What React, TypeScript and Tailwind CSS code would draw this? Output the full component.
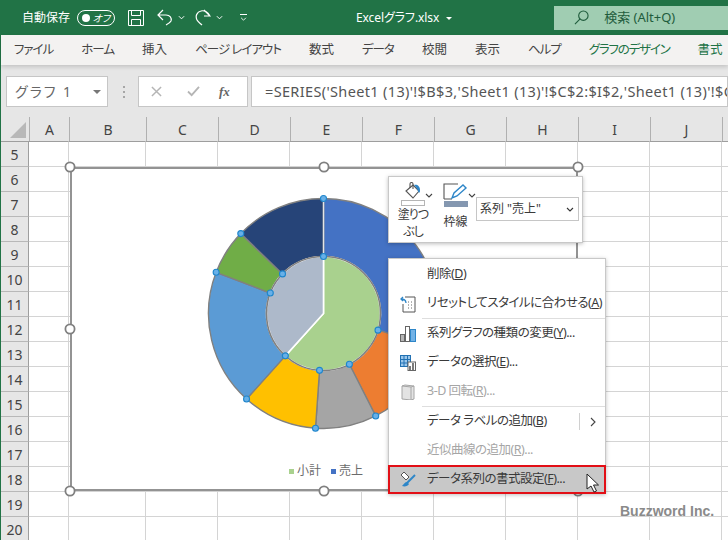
import type { ReactNode } from "react";

const font = "font-['Noto_Sans','Noto_Sans_CJK_JP',sans-serif] [font-feature-settings:'palt']";

const tabs = [
  { name: "ファイル", kana: true },
  { name: "ホーム", kana: true },
  { name: "挿入", kana: false },
  { name: "ページ レイアウト", kana: true },
  { name: "数式", kana: false },
  { name: "データ", kana: true },
  { name: "校閲", kana: false },
  { name: "表示", kana: false },
  { name: "ヘルプ", kana: true },
];
const columns = [
  { name: "A", w: "w-[40px]" },
  { name: "B", w: "w-[77px]" },
  { name: "C", w: "w-[72px]" },
  { name: "D", w: "w-[72px]" },
  { name: "E", w: "w-[72px]" },
  { name: "F", w: "w-[72px]" },
  { name: "G", w: "w-[72px]" },
  { name: "H", w: "w-[72px]" },
  { name: "I", w: "w-[72px]" },
  { name: "J", w: "w-[72px]" },
  { name: "", w: "w-[40px]" },
];
const rowNums = [5, 6, 7, 8, 9, 10, 11, 12, 13, 14, 15, 16, 17, 18, 19, 20];

const CX = 323.5;
const CY = 313.5;
const R = 115;
const RI = 57;

function pt(r: number, deg: number) {
  const a = (deg * Math.PI) / 180;
  return `${(CX + r * Math.sin(a)).toFixed(2)} ${(CY - r * Math.cos(a)).toFixed(2)}`;
}

function ring(a: number, b: number) {
  const large = b - a > 180 ? 1 : 0;
  return `M${pt(RI, a)} L${pt(R, a)} A${R} ${R} 0 ${large} 1 ${pt(R, b)} L${pt(RI, b)} A${RI} ${RI} 0 ${large} 0 ${pt(RI, a)}Z`;
}

function pie(a: number, b: number) {
  const large = b - a > 180 ? 1 : 0;
  return `M${CX} ${CY} L${pt(RI, a)} A${RI} ${RI} 0 ${large} 1 ${pt(RI, b)}Z`;
}

const outer = [
  { from: 0, to: 107, color: "#4472c4" },
  { from: 107, to: 153, color: "#ed7d31" },
  { from: 153, to: 184, color: "#a5a5a5" },
  { from: 184, to: 222, color: "#ffc000" },
  { from: 222, to: 291, color: "#5b9bd5" },
  { from: 291, to: 314, color: "#70ad47" },
  { from: 314, to: 360, color: "#264478" },
];
const handles = [0, 107, 153, 184, 222, 291, 314];
const frame = [
  [70, 167],
  [324, 167],
  [578, 167],
  [70, 329],
  [70, 491],
  [324, 491],
  [578, 491],
];

function Chevron({ className }: { className: string }) {
  return (
    <svg viewBox="0 0 8 5" className={className} fill="none" stroke="currentColor" strokeWidth="1.1">
      <path d="M1 1l3 3 3-3" />
    </svg>
  );
}

function MenuItem({ icon, children, gray, right }: { icon?: ReactNode; children: ReactNode; gray?: boolean; right?: boolean }) {
  return (
    <div className={`flex h-[29px] items-center whitespace-nowrap text-[12.5px] tracking-[-0.5px] ${gray ? "text-[#a6a6a6]" : "text-[#3a3a3a]"}`}>
      <div className="flex w-[38px] shrink-0 justify-center">{icon}</div>
      <div className="flex-1">{children}</div>
      {right && (
        <div className="flex h-[17px] w-[26px] items-center justify-center border-l border-[#d0d0d0]">
          <svg viewBox="0 0 6 10" className="h-[10px] w-[6px]" fill="none" stroke="#444" strokeWidth="1.1">
            <path d="M1 1l4 4-4 4" />
          </svg>
        </div>
      )}
    </div>
  );
}

function ChartArea() {
  return (
    <div className="absolute left-[70px] top-[167px] h-[324px] w-[508px] border-2 border-[#939393] bg-white">
      <svg viewBox="72 169 504 320" className="absolute left-0 top-0 h-[320px] w-[504px] overflow-visible">
        {outer.map((s) => (
          <path key={s.from} d={ring(s.from, s.to)} fill={s.color} stroke="#808080" strokeWidth="1.4" />
        ))}
        <path d={`M${pt(RI, 0)} L${pt(R, 0)}`} stroke="#e4e4e4" strokeWidth="1.4" />
        <path d={pie(0, 222)} fill="#a9d18e" stroke="#fff" strokeWidth="1.6" />
        <path d={pie(222, 360)} fill="#adb9ca" stroke="#fff" strokeWidth="1.6" />
        <circle cx={CX} cy={CY} r={RI} fill="none" stroke="#808080" strokeWidth="1.6" />
        {handles.map((d) => {
          const [x, y] = pt(R, d).split(" ");
          const [ix, iy] = pt(RI, d).split(" ");
          return (
            <g key={d} fill="#68b0e8" stroke="#1f86cc" strokeWidth="1.1">
              {d !== 107 && <circle cx={x} cy={y} r="3" />}
              <circle cx={ix} cy={iy} r="3" />
            </g>
          );
        })}
        {frame.map(([x, y]) => (
          <circle key={`${x}-${y}`} cx={x} cy={y} r="4.6" fill="#fff" stroke="#808080" strokeWidth="1.8" />
        ))}
      </svg>
      <div className="absolute left-[217px] top-[293px] flex items-center gap-[10px] text-[12px] text-[#6b6b6b]">
        <div className="flex items-center gap-[3px]">
          <span className="h-[5px] w-[5px] bg-[#a9d18e]" />
          小計
        </div>
        <div className="flex items-center gap-[3px]">
          <span className="h-[5px] w-[5px] bg-[#4472c4]" />
          売上
        </div>
      </div>
    </div>
  );
}

function FormatBar() {
  return (
    <div className="absolute left-[388px] top-[176px] flex h-[67px] w-[195px] items-start whitespace-nowrap border border-[#c8c8c8] bg-white text-[#3a3a3a] shadow-[0_1px_4px_rgba(0,0,0,0.25)]">
      <div className="ml-[9px] mt-[5px] flex w-[30px] flex-col items-center text-[12px] leading-[17px] tracking-[-1px]">
        <svg viewBox="0 0 20 18" className="h-[18px] w-[20px]">
          <path d="M3 9l7-6 6 6-6 7z" fill="#fff" stroke="#555" strokeWidth="1.1" />
          <path d="M7 6V2a1.5 1.5 0 013 0v5" fill="none" stroke="#555" strokeWidth="1.1" />
          <path d="M11 3c3-1 6 1 6 5 0 1 0 2-1 3-1-1-1-3-2-4-1-2-2-3-3-4z" fill="#2e86c8" />
        </svg>
        <span className="h-[6px] w-[24px] border border-[#b5b5b5] bg-white" />
        <span>塗りつ</span>
        <span>ぶし</span>
      </div>
      <Chevron className="-ml-[3px] mt-[16px] h-[5px] w-[8px] text-[#444]" />
      <div className="ml-[10px] mt-[6px] flex w-[25px] flex-col items-center text-[12px] leading-[17px]">
        <svg viewBox="0 0 25 18" className="h-[18px] w-[25px]">
          <path d="M1 16V1h14M1 16h8" fill="none" stroke="#555" strokeWidth="1.1" />
          <path d="M9 15l2-5 9-8 3 3-9 8z" fill="#fff" stroke="#2e86c8" strokeWidth="1.4" />
        </svg>
        <span className="mb-[6px] h-[6px] w-[24px] bg-[#8497b0]" />
        <span>枠線</span>
      </div>
      <Chevron className="mt-[16px] h-[5px] w-[8px] text-[#444]" />
      <div className="mt-[20px] flex h-[24px] w-[103px] items-center justify-between border border-[#c6c6c6] pl-[3px] pr-[4px] text-[12px]">
        <span>系列 "売上"</span>
        <Chevron className="h-[5px] w-[8px] text-[#333]" />
      </div>
    </div>
  );
}

function ContextMenu() {
  return (
    <div className="absolute left-[388px] top-[258px] w-[218px] border border-[#c8c8c8] bg-white pt-px shadow-[0_1px_4px_rgba(0,0,0,0.25)]">
      <MenuItem>
        削除(<span className="underline">D</span>)
      </MenuItem>
      <MenuItem
        icon={
          <svg viewBox="0 0 16 18" className="h-[18px] w-[16px]">
            <path d="M5 2h10v15H3V9" fill="#fff" stroke="#555" strokeWidth="1" />
            <path d="M8 7h1m2 0h1M8 10h1m2 0h1M8 13h1m2 0h1" stroke="#666" />
            <path d="M6 8C6 4 3 4 1 4m2-2L1 4l2 2" fill="none" stroke="#2e86c8" strokeWidth="1.3" />
          </svg>
        }
      >
        リセットしてスタイルに合わせる(<span className="underline">A</span>)
      </MenuItem>
      <div className="ml-[33px] h-px bg-[#dedede]" />
      <MenuItem
        icon={
          <svg viewBox="0 0 16 16" className="h-[16px] w-[16px]">
            <rect x="0.5" y="8.5" width="4" height="7" fill="#b5b5b5" stroke="#666" />
            <rect x="5.5" y="0.5" width="4" height="15" fill="#fff" stroke="#666" />
            <rect x="10.5" y="3.5" width="5" height="12" fill="#72b2e6" stroke="#2e86c8" />
          </svg>
        }
      >
        系列グラフの種類の変更(<span className="underline">Y</span>)...
      </MenuItem>
      <MenuItem
        icon={
          <svg viewBox="0 0 16 16" className="h-[16px] w-[16px]">
            <rect x="0.5" y="0.5" width="10" height="11" fill="#9cc8ec" stroke="#2271b3" />
            <path d="M0.5 4.5h10M0.5 8h10M4 0.5v11M7.5 0.5v11" stroke="#2271b3" />
            <rect x="8" y="7" width="7.5" height="8.5" fill="#fff" stroke="#666" />
            <path d="M10 15V11M13 15V8" stroke="#444" strokeWidth="1.4" />
          </svg>
        }
      >
        データの選択(<span className="underline">E</span>)...
      </MenuItem>
      <MenuItem
        gray
        icon={
          <svg viewBox="0 0 14 16" className="h-[16px] w-[14px]">
            <path d="M1 2l3-1 9 1v13l-3 1-9-1z" fill="#e3e3e3" stroke="#a6a6a6" />
            <path d="M1 2l9 1v13M10 3l3-1" fill="none" stroke="#a6a6a6" />
          </svg>
        }
      >
        3-D 回転(<span className="underline">R</span>)...
      </MenuItem>
      <div className="ml-[33px] h-px bg-[#dedede]" />
      <MenuItem right>
        データ ラベルの追加(<span className="underline">B</span>)
      </MenuItem>
      <MenuItem gray>
        近似曲線の追加(<span className="underline">R</span>)...
      </MenuItem>
      <div className="-mx-px -mb-px border-2 border-[#e20f16] bg-[#c8c8c8]">
        <div className="-mx-[1px] -my-[2px]">
          <MenuItem
            icon={
              <svg viewBox="0 0 18 17" className="h-[17px] w-[18px]">
                <path d="M5 1l5 5-3 3-5-5z" fill="#fff" stroke="#555" />
                <path d="M16 4L8 12" stroke="#2e86c8" strokeWidth="2" />
                <path d="M8 11c-2 0-3 2-5 4 3 1 6 0 7-2z" fill="#2e86c8" />
              </svg>
            }
          >
            データ系列の書式設定(<span className="underline">F</span>)...
          </MenuItem>
        </div>
      </div>
    </div>
  );
}

export default function App() {
  return (
    <div className={`relative h-[540px] w-[728px] overflow-hidden bg-white ${font}`}>
      <div className="flex h-[35px] items-center bg-[#217346] text-white">
        <span className="ml-[22px] text-[12px]">自動保存</span>
        <div className="ml-[7px] flex h-[16px] w-[38px] items-center justify-between rounded-full border border-white pl-[4px] pr-[4px]">
          <span className="h-[8px] w-[8px] rounded-full bg-white" />
          <span className="text-[10px] italic leading-none">オフ</span>
        </div>
        <svg viewBox="0 0 16 16" className="ml-[13px] h-[16px] w-[16px]" fill="none" stroke="#fff" strokeWidth="1">
          <path d="M0.5 0.5h15v15h-15zM3.5 0.5v5h9v-5M3.5 15.5v-6h9v6" />
        </svg>
        <svg viewBox="0 0 16 17" className="ml-[13px] h-[17px] w-[16px]" fill="none" stroke="#fff" strokeWidth="1.2">
          <path d="M6 1L1 6l5 5M1 6h8c4 0 6 3 5 6-1 2-3 3-5 4" />
        </svg>
        <Chevron className="ml-[5px] h-[5px] w-[7px] text-white" />
        <svg viewBox="0 0 16 17" className="ml-[10px] h-[17px] w-[16px]" fill="none" stroke="#fff" strokeWidth="1.2">
          <path d="M9 1l6 6H9M15 7C13 3 9 1 6 2 2 3 0 7 2 11c1 2 3 3 5 5" />
        </svg>
        <Chevron className="ml-[5px] h-[5px] w-[7px] text-white" />
        <div className="ml-[17px] flex flex-col items-center gap-[2px]">
          <span className="h-px w-[7px] bg-white" />
          <Chevron className="h-[4px] w-[7px] text-white" />
        </div>
        <span className="ml-[109px] text-[12px] tracking-[-0.1px]">Excelグラフ.xlsx</span>
        <span className="ml-[7px] mt-[2px] h-0 w-0 border-x-[3px] border-t-[3px] border-x-transparent border-t-white" />
        <div className="ml-[102px] flex h-[24px] flex-1 items-center bg-[#a0cdb2] text-[#1f5c3c]">
          <svg viewBox="0 0 16 16" className="ml-[20px] h-[15px] w-[15px]" fill="none" stroke="#1f5c3c" strokeWidth="1.2">
            <circle cx="10" cy="6" r="5" />
            <path d="M6.5 9.5L1 15" />
          </svg>
          <span className="ml-[15px] text-[13px]">検索 (Alt+Q)</span>
        </div>
      </div>

      <div className="border-l border-[#217346]">
        <div className="relative z-10 flex h-[30px] items-center gap-[28px] overflow-hidden whitespace-nowrap bg-[#f3f2f1] pl-[13px] text-[12.5px] text-[#444] shadow-[0_2px_4px_rgba(0,0,0,0.15)]">
          {tabs.map((t) => (
            <span key={t.name} className={t.kana ? "tracking-[-1px]" : ""}>
              {t.name}
            </span>
          ))}
          <span className="tracking-[-1.2px] text-[#217346]">グラフのデザイン</span>
          <span className="text-[#217346]">書式</span>
        </div>

        <div className="flex h-[52px] items-start bg-[#e6e6e6] pt-[11px]">
          <div className="ml-[5px] flex h-[31px] w-[102px] items-center justify-between border border-[#c6c6c6] bg-white pl-[8px] pr-[6px] text-[14px] tracking-[2px] text-[#666]">
            <span>グラフ 1</span>
            <span className="h-0 w-0 border-x-[4px] border-t-[4px] border-x-transparent border-t-[#777]" />
          </div>
          <div className="ml-[15px] mt-[10px] flex flex-col gap-[3px]">
            <span className="h-[2px] w-[2px] bg-[#a6a6a6]" />
            <span className="h-[2px] w-[2px] bg-[#a6a6a6]" />
            <span className="h-[2px] w-[2px] bg-[#a6a6a6]" />
          </div>
          <div className="ml-[13px] flex h-[31px] w-[110px] items-center border border-[#c6c6c6] bg-white text-[#b5b5b5]">
            <svg viewBox="0 0 12 12" className="ml-[12px] h-[11px] w-[11px]" fill="none" stroke="currentColor" strokeWidth="1.6">
              <path d="M1 1l10 10M11 1L1 11" />
            </svg>
            <svg viewBox="0 0 14 12" className="ml-[25px] h-[11px] w-[13px]" fill="none" stroke="currentColor" strokeWidth="2">
              <path d="M1 6l4 4 8-9" />
            </svg>
            <span className="ml-[19px] font-['Liberation_Serif',serif] text-[13px] font-bold italic text-[#666]">fx</span>
          </div>
          <div className="ml-[3px] flex h-[31px] flex-1 items-center overflow-hidden whitespace-nowrap border border-[#c6c6c6] bg-white pl-[13px] text-[14.5px] tracking-[0.35px] text-[#555]">
            =SERIES('Sheet1 (13)'!$B$3,'Sheet1 (13)'!$C$2:$I$2,'Sheet1 (13)'!$C$3:$I$3,2)
          </div>
        </div>

        <div className="flex h-[24px] bg-[#e6e6e6] text-[14px] text-[#444]">
          <div className="relative w-[28px] shrink-0">
            <span className="absolute bottom-[3px] right-[3px] h-0 w-0 border-b-[16px] border-l-[16px] border-b-[#b8b8b8] border-l-transparent" />
          </div>
          {columns.map((c) => (
            <div key={c.w + c.name} className={`flex shrink-0 items-center justify-center border-l border-[#b0b0b0] ${c.w}`}>
              {c.name}
            </div>
          ))}
        </div>

        {rowNums.map((n) => (
          <div key={n} className="flex h-[25px] text-[14px] text-[#444]">
            <div className={`flex w-[28px] shrink-0 items-center justify-center border-r border-t border-r-[#9e9e9e] ${n === 5 ? "border-t-[#9e9e9e]" : "border-t-[#b8b8b8]"} bg-[#e6e6e6]`}>
              {n}
            </div>
            {columns.map((c) => (
              <div key={c.w + c.name} className={`shrink-0 border-r border-t border-r-[#d4d4d4] ${n === 5 ? "border-t-[#9e9e9e]" : "border-t-[#d4d4d4]"} ${c.w}`} />
            ))}
          </div>
        ))}
      </div>

      <ChartArea />
      <FormatBar />
      <ContextMenu />

      <svg viewBox="0 0 13 20" className="absolute left-[586px] top-[473px] h-[20px] w-[13px]">
        <path d="M1 1v15l4-3 3 6 2.5-1-3-6h5z" fill="#fff" stroke="#222" strokeWidth="1" />
      </svg>
      <span className="absolute left-[620px] top-[501px] font-['Liberation_Sans',sans-serif] text-[14px] font-bold text-[#8a8a8a]">
        Buzzword Inc.
      </span>
    </div>
  );
}
